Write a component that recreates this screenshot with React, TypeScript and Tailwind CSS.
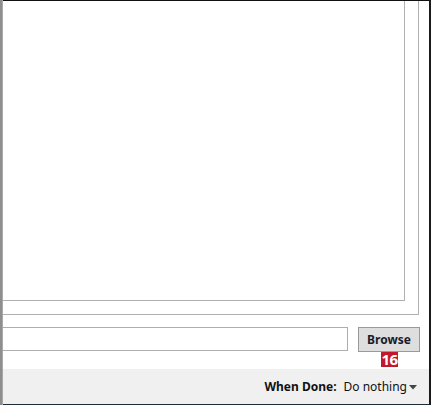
import React from "react";

export default function App() {
  return (
    <div
      className="w-[431px] h-[405px] flex flex-row bg-white overflow-hidden"
      style={{ fontFamily: '"Noto Sans", "Open Sans", sans-serif' }}
    >
      <div className="w-[3px] h-full bg-[#8e8e8e] border-r border-[#a8a8a8]" />
      <div className="flex-1 flex flex-col">
        <div className="h-[1px] bg-[#111]" />
        <div className="flex flex-col pr-[10px]">
          <div className="h-[314px] border-r border-b border-[#b0b0b0] flex flex-col">
            <div className="h-[300px] mr-[13px] border-r border-b border-[#b0b0b0]" />
          </div>
        </div>
        <div className="mt-[12px] flex flex-row items-start pr-[9px]">
          <div className="w-[345px] h-[24px] border border-l-0 border-[#adadad] bg-white" />
          <div className="relative ml-[10px]">
            <div className="w-[62px] h-[25px] border border-[#9a9a9a] bg-[#dedede] flex items-center justify-center text-[12px] font-bold text-[#1b1b28] leading-none">
              Browse
            </div>
            <div className="absolute left-[23px] top-[25px] w-[17px] h-[15px] bg-[#c3172b] text-white text-[15px] font-bold leading-none flex items-center justify-center tracking-[-0.5px]">
              16
            </div>
          </div>
        </div>
        <div className="h-[17px]" />
        <div className="h-[35px] bg-[#f0f0f0] flex flex-row items-center justify-end pr-[12px] text-[12px] text-[#111]">
          <span className="font-bold">When Done:</span>
          <span className="ml-[7px]">Do nothing</span>
          <svg width="8" height="5" viewBox="0 0 8 5" className="ml-[2px] mt-[1px]">
            <path d="M0 0 L8 0 L4 4.5 Z" fill="#444" />
          </svg>
        </div>
        <div className="flex-1 bg-[#1d2b38]" />
      </div>
      <div className="w-[2px] h-full bg-[#1a1a1a]" />
    </div>
  );
}
